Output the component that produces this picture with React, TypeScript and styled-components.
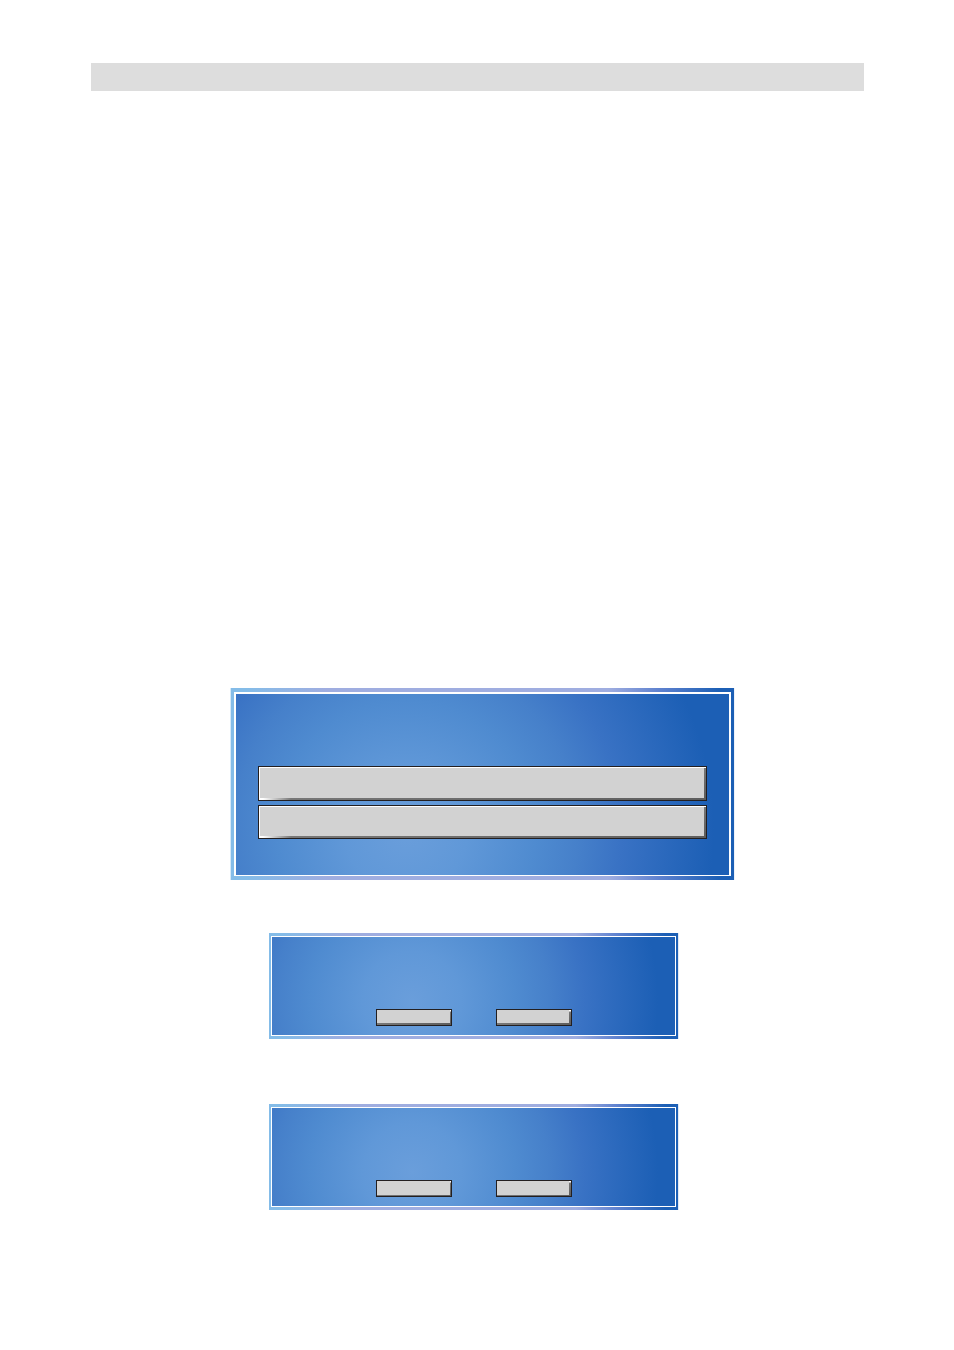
import React from "react";
import styled, { createGlobalStyle } from "styled-components";

const GlobalStyle = createGlobalStyle`
  *, *::before, *::after { box-sizing: border-box; }
  body {
    margin: 0;
    background: #ffffff;
    font-family: "Liberation Sans", Arial, sans-serif;
  }
`;

const Page = styled.div`
  display: flex;
  flex-direction: column;
  min-height: 100vh;
  padding: 63px 90px 140px 91px;
`;

const TitleBar = styled.header`
  height: 28px;
  background: #dddddd;
`;

const Content = styled.main`
  display: flex;
  flex-direction: column;
  margin-top: 597px;
`;

type Size = "large" | "small";

const Panel = styled.section<{ $size: Size; $gap: number }>`
  display: flex;
  width: ${(p) => (p.$size === "large" ? "503px" : "409px")};
  min-height: ${(p) => (p.$size === "large" ? "192px" : "106px")};
  margin-top: ${(p) => p.$gap}px;
  margin-left: ${(p) => (p.$size === "large" ? "140px" : "178px")};
  padding: ${(p) => (p.$size === "large" ? "4px 3px" : "3px 2px")};
  background: linear-gradient(
    to right,
    #84bce8 0%,
    #84bce8 3%,
    #9fade0 19%,
    #9fade0 75%,
    #5f82cf 85%,
    #1c5fb5 97%
  );
  box-shadow: ${(p) =>
    p.$size === "large"
      ? "-1px 0 0 #d5e8f7, 1px 0 0 #edf2fa"
      : "1px 0 0 #dfe9f6"};
`;

const glow = (place: string) => `radial-gradient(
  circle ${place},
  #6a9edb 0%,
  #6098d8 20%,
  #4f8bd0 42%,
  #4680ca 56%,
  #3972c4 70%,
  #1c5fb5 100%
)`;

const PanelBody = styled.div<{ $size: Size }>`
  display: flex;
  flex: 1;
  border: solid #ffffff;
  border-width: ${(p) => (p.$size === "large" ? "2px 2px 1px" : "1px")};
  background: ${(p) =>
    p.$size === "large"
      ? glow("308px at 170px 136px")
      : glow("246px at 140px 64px")};
`;

const OptionList = styled.div`
  display: flex;
  flex: 1;
  flex-direction: column;
  gap: 4px;
  padding: 72px 22px 36px;
`;

const ButtonRow = styled.div`
  display: flex;
  flex: 1;
  gap: 44px;
  padding: 72px 0 9px 104px;
`;

const BevelButton = styled.button`
  display: block;
  margin: 0;
  padding: 0;
  border: 1px solid #231f20;
  border-radius: 0;
  cursor: pointer;
`;

const WideButton = styled(BevelButton)<{ $height: number }>`
  width: 100%;
  height: ${(p) => p.$height}px;
  background:
    linear-gradient(#ffffff, #ffffff) top / 100% 1px no-repeat,
    linear-gradient(#777777, #5b5b5b) right / 2px 100% no-repeat,
    linear-gradient(to right, #ffffff 4px, #777777 32px, #5e5e5e) bottom / 100% 2px no-repeat,
    linear-gradient(#ffffff, #ffffff) left / 1px 100% no-repeat,
    #d2d2d2;
`;

const ChoiceButton = styled(BevelButton)<{ $right: number; $bottom: number }>`
  width: 76px;
  height: 17px;
  background:
    linear-gradient(#ffffff, #ffffff) right top / ${(p) => p.$right}px 1px no-repeat,
    linear-gradient(#bcbcbc 2px, #777777 2px, #5b5b5b) right / ${(p) => p.$right}px 100% no-repeat,
    linear-gradient(to right, #777777, #5e5e5e) bottom / 100% ${(p) => p.$bottom}px no-repeat,
    #d2d2d2;
`;

function Confirmation({ gap, bevel }: { gap: number; bevel: number }) {
  return (
    <Panel $size="small" $gap={gap}>
      <PanelBody $size="small">
        <ButtonRow>
          <ChoiceButton type="button" aria-label="Left choice" $right={1} $bottom={bevel} />
          <ChoiceButton type="button" aria-label="Right choice" $right={2} $bottom={bevel} />
        </ButtonRow>
      </PanelBody>
    </Panel>
  );
}

export default function App() {
  return (
    <>
      <GlobalStyle />
      <Page>
        <TitleBar />
        <Content>
          <Panel $size="large" $gap={0}>
            <PanelBody $size="large">
              <OptionList>
                <WideButton type="button" aria-label="First option" $height={35} />
                <WideButton type="button" aria-label="Second option" $height={34} />
              </OptionList>
            </PanelBody>
          </Panel>
          <Confirmation gap={53} bevel={2} />
          <Confirmation gap={65} bevel={1} />
        </Content>
      </Page>
    </>
  );
}
